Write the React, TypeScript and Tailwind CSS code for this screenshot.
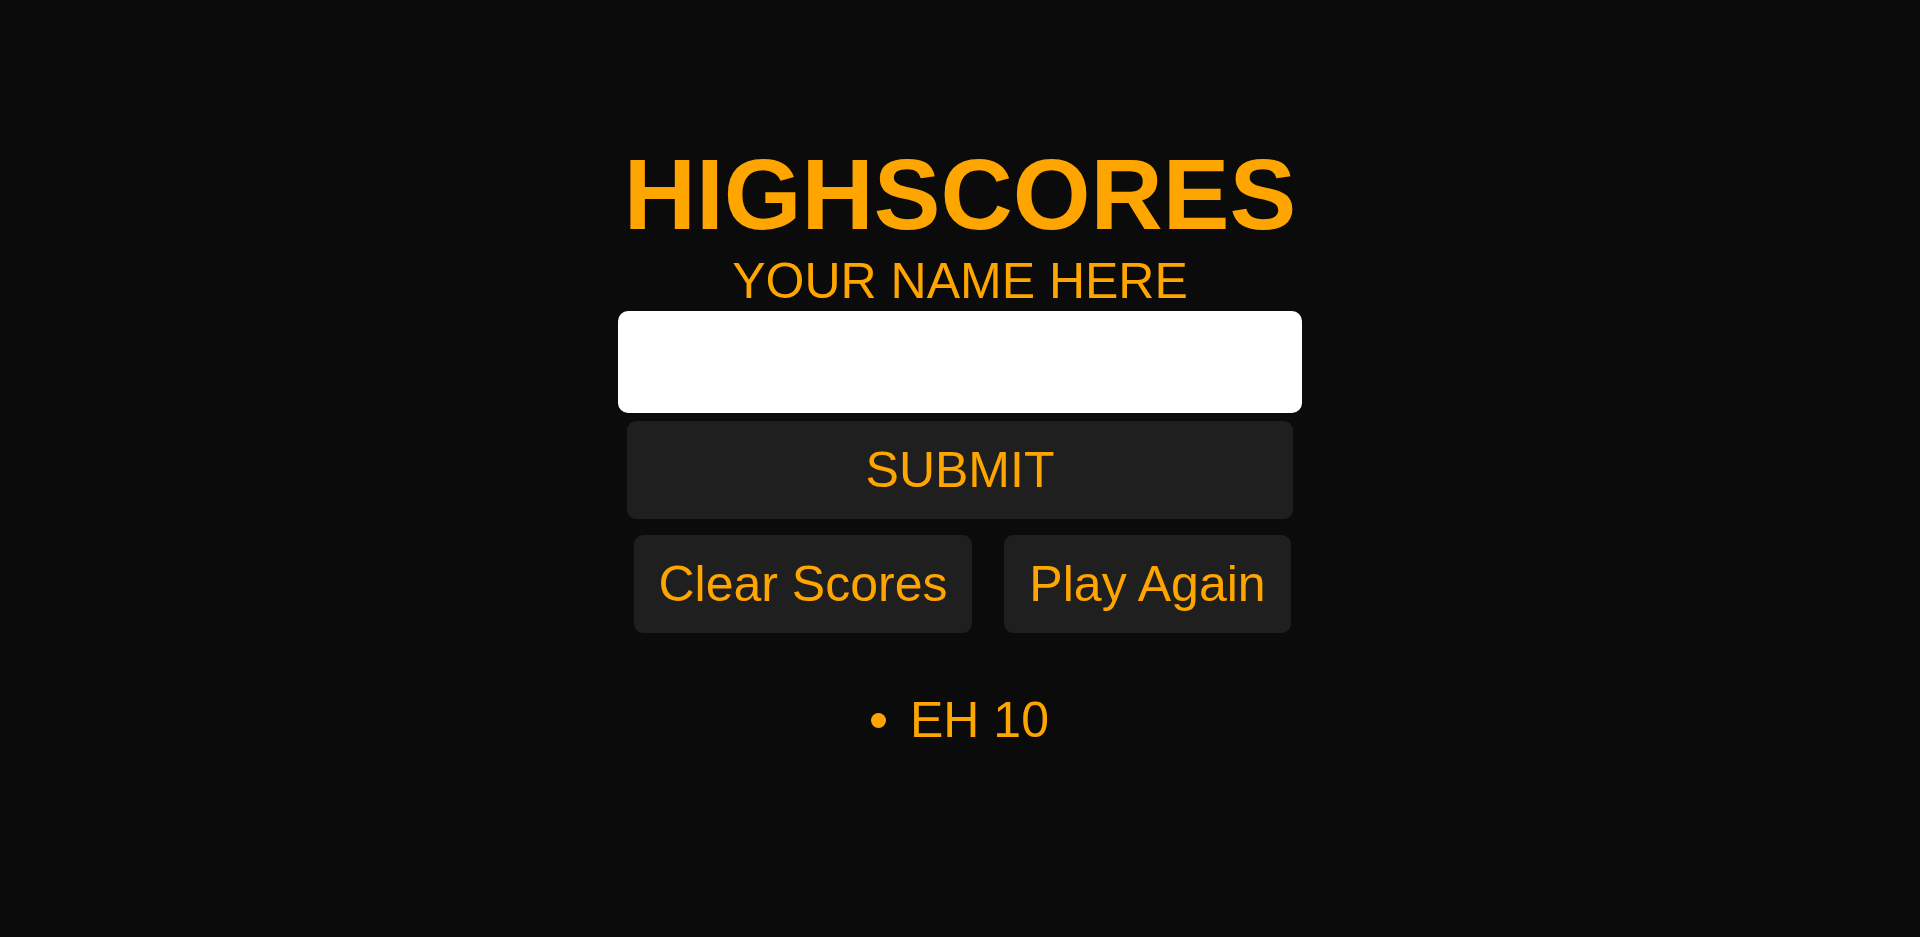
export default function App() {
  return (
    <div className="min-h-screen w-full bg-[#0b0b0b] text-[#ffa500] [font-family:'Liberation_Sans',Arial,sans-serif]">
      <div className="flex flex-col items-center pt-[137px]">
        <h1 className="text-[100px] font-bold leading-[115px]">HIGHSCORES</h1>
        <p className="text-[50px] leading-[58px]">YOUR NAME HERE</p>

        <input
          type="text"
          className="mt-[1px] h-[102px] w-[684px] rounded-[10px] bg-white px-4 text-[50px] text-black outline-none"
        />

        <button className="mt-[8px] h-[98px] w-[666px] rounded-[9px] bg-[#1f1f1f] text-[50px] leading-[58px] text-[#ffa500]">
          SUBMIT
        </button>

        <div className="mt-[16px] flex gap-[32px] pl-[5px]">
          <button className="h-[98px] w-[338px] rounded-[9px] bg-[#1f1f1f] text-[50px] leading-[58px] text-[#ffa500]">
            Clear Scores
          </button>
          <button className="h-[98px] w-[287px] rounded-[9px] bg-[#1f1f1f] text-[50px] leading-[58px] text-[#ffa500]">
            Play Again
          </button>
        </div>

        <ul className="mt-[58px] text-[50px] leading-[58px]">
          <li className="flex items-center gap-[24px]">
            <span className="h-[15px] w-[15px] rounded-full bg-[#ffa500]" />
            <span>EH 10</span>
          </li>
        </ul>
      </div>
    </div>
  );
}
